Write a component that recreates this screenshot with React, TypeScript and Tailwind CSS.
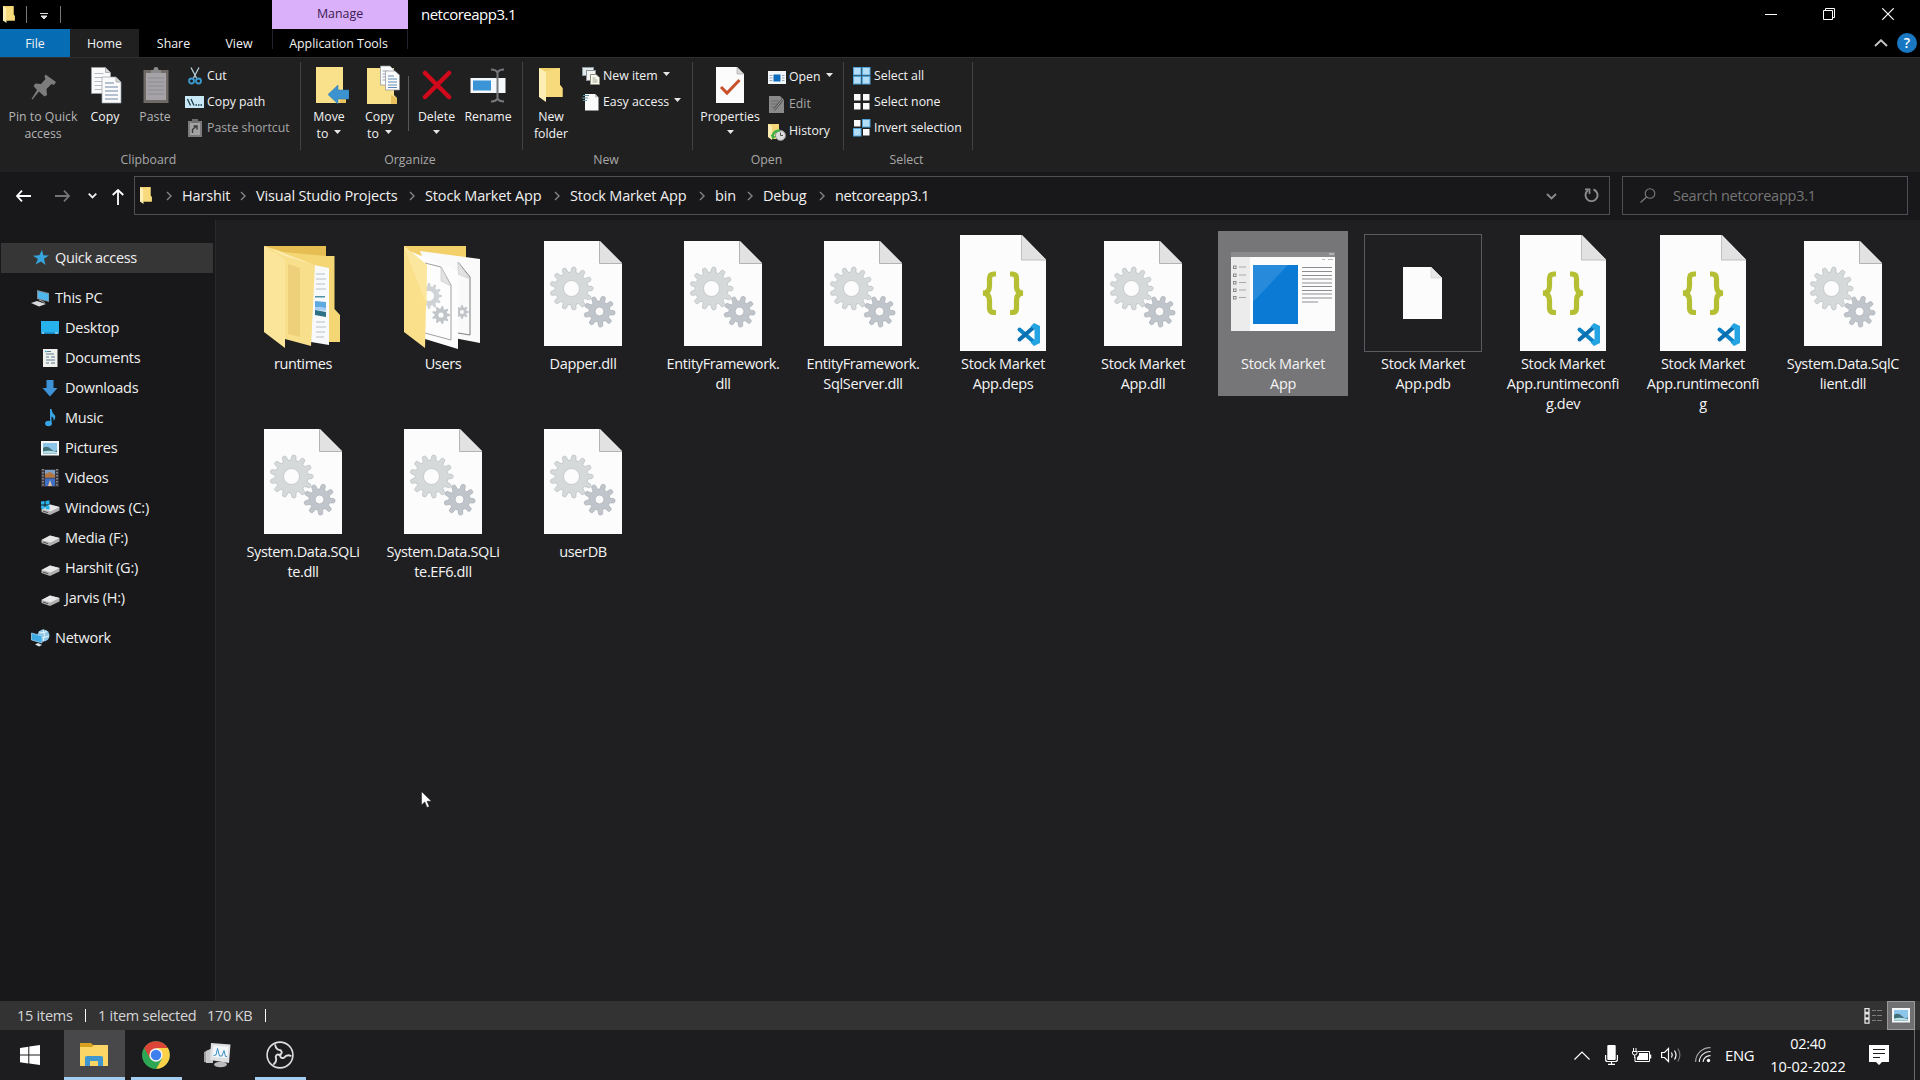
import React from "react";

type Kids = { children?: React.ReactNode };

/* ---------- helpers ---------- */

function gearPath(cx: number, cy: number, outer: number, inner: number, hole: number, teeth: number, rot = 0) {
  const step = (Math.PI * 2) / teeth;
  const pts: string[] = [];
  for (let i = 0; i < teeth; i++) {
    const a = i * step + rot;
    const add = (ang: number, r: number) =>
      pts.push(`${(cx + Math.cos(ang) * r).toFixed(2)} ${(cy + Math.sin(ang) * r).toFixed(2)}`);
    add(a - step * 0.32, inner);
    add(a - step * 0.2, outer - 0.8);
    add(a - step * 0.1, outer);
    add(a + step * 0.1, outer);
    add(a + step * 0.2, outer - 0.8);
    add(a + step * 0.32, inner);
  }
  return `M${pts.join("L")}Z M${cx + hole} ${cy}a${hole} ${hole} 0 1 0 ${-2 * hole} 0a${hole} ${hole} 0 1 0 ${2 * hole} 0Z`;
}

const BIG_GEAR = gearPath(27.5, 47.5, 21.5, 16.5, 8, 13, -1.45);
const SMALL_GEAR = gearPath(55.5, 70.5, 15.5, 10.5, 4.4, 9, -1.3);

/* ---------- file icons ---------- */

function DllIcon() {
  return (
    <svg width="78" height="105" viewBox="0 0 78 105">
      <path d="M0 0H56L78 22V105H0Z" fill="#fcfcfc" />
      <path d="M55.5 0L78 22.5H55.5Z" fill="#e2e2e2" />
      <path d="M55.5 0V22.5H78" fill="none" stroke="#b4b4b4" strokeWidth="1" />
      <path d={BIG_GEAR} fill="#d5d9da" stroke="#bfc3c5" strokeWidth="0.8" fillRule="evenodd" />
      <path d={SMALL_GEAR} fill="#c0c5cb" stroke="#acb1b8" strokeWidth="0.8" fillRule="evenodd" />
    </svg>
  );
}

function JsonIcon() {
  return (
    <svg width="86" height="116" viewBox="0 0 86 116">
      <path d="M0 0H62L86 24.500V116H0Z" fill="#fcfcfc" />
      <path d="M61.500 0L86 25H61.500Z" fill="#e2e2e2" />
      <path d="M61.500 0V25H86" fill="none" stroke="#c0c0c0" />
      <path d="M36 39H34Q29.500 39 29.500 43.500V51Q29.500 58 23 58.200Q29.500 58.400 29.500 65.500V73Q29.500 77.500 34 77.500H36" fill="none" stroke="#b5bf33" strokeWidth="5.200" />
      <path d="M50 39H52Q56.500 39 56.500 43.500V51Q56.500 58 63 58.200Q56.500 58.400 56.500 65.500V73Q56.500 77.500 52 77.500H50" fill="none" stroke="#b5bf33" strokeWidth="5.200" />
      <path d="M59.500 94.500L74 107" stroke="#0a83c8" strokeWidth="4" strokeLinecap="round" />
      <path d="M59.500 104.500L74 92" stroke="#0a6fb0" strokeWidth="4" strokeLinecap="round" />
      <path d="M74 88L80 91V108L74 111L70.500 107.500L74.500 104.500V94.500L70.500 91.500Z" fill="#25a4e4" />
    </svg>
  );
}

function FolderDocsIcon() {
  return (
    <svg width="76" height="103" viewBox="0 0 76 103" className="mt-[9px] mr-[2px]">
      <path d="M0 0H62V10H70.500V63L76 69V96H62L0 86Z" fill="#f4d674" />
      <path d="M0 0H62V10L20 6Z" fill="#e6bd52" />
      <path d="M50 19L65 22V99L47 96Z" fill="#f7f9fa" />
      <path d="M52 28h9M52 33h10M52 38h9M52 43h10M52 76h9M52 81h10M52 86h9M52 91h8" stroke="#b8c0c8" />
      <path d="M51 50h10v1.500H51z" fill="#4e93a5" />
      <path d="M51 55l11 1v6l-11 -1z" fill="#5ea9e0" />
      <path d="M51 61l11 1v3l-11 -1z" fill="#a5cdf5" />
      <path d="M51 64l11 2v5l-11 -2z" fill="#2d7186" />
      <path d="M10 3L51 19L47 100L21 93Z" fill="#f8df8c" />
      <path d="M24 18L36 22V91L24 88Z" fill="#efd07a" />
      <path d="M0 0L21 13V102L0 86Z" fill="#fbe59a" />
      <path d="M0 0L51 19L21 10Z" fill="#fdecaf" />
    </svg>
  );
}

function FolderGearsIcon() {
  return (
    <svg width="76" height="103" viewBox="0 0 76 103" className="mt-[9px] mr-[2px]">
      <path d="M0 0H62V40L20 60L0 86Z" fill="#f3d069" />
      <path d="M16 5L76 13V97L50 92Z" fill="#fafafa" />
      <path d="M54 16L66 31V89L54 87" fill="none" stroke="#7d7d7d" />
      <path d="M54 16V28L66 33Z" fill="#e2e2e2" stroke="#c2c2c2" strokeWidth="0.600" />
      <path d={gearPath(58, 66, 7, 5, 2, 8)} fill="#c2c5c9" fillRule="evenodd" />
      <path d="M8 6L54 25V103L21 93Z" fill="#fdfdfd" />
      <path d="M21 17L37 21L47 39V94L21 87" fill="none" stroke="#a0a0a0" />
      <path d="M37 21V35L47 40Z" fill="#e3e3e3" stroke="#c4c4c4" strokeWidth="0.600" />
      <path d={gearPath(25, 50, 13, 10, 5, 12)} fill="#cfd3d6" fillRule="evenodd" />
      <path d={gearPath(37, 69, 9, 6.5, 2.6, 9)} fill="#c0c5ca" fillRule="evenodd" />
      <path d="M0 0L23 19L21 102L0 86Z" fill="#fbe08c" />
      <path d="M0 0L23 19V60Z" fill="#fce9a6" opacity="0.700" />
    </svg>
  );
}

function AppWindowIcon() {
  return (
    <svg width="104" height="79" viewBox="0 0 104 79" className="-mt-[3px]">
      <rect width="104" height="5" fill="#8a8a8a" />
      <path d="M98 2h5" stroke="#ddd" />
      <rect y="5" width="104" height="74" fill="#fcfcfc" />
      <rect y="5" width="19" height="74" fill="#ececec" />
      <path d="M91 7.500h3M97 7.500h5" stroke="#bbb" />
      {[15, 23, 30.500, 38, 45.500].map((y) => (
        <g key={y}>
          <rect x="2.500" y={y - 1} width="2.500" height="2.500" fill="none" stroke="#888" />
          <path d={`M8 ${y}h7`} stroke="#a8a8a8" />
        </g>
      ))}
      <rect x="22" y="13" width="45" height="59" fill="#0a7ad4" />
      <path d="M22 13H57L22 50Z" fill="#3a94e0" opacity="0.600" />
      {[15.500, 19.500, 23.500, 27, 31, 34.500, 38.500, 42, 46, 50].map((y, i) => (
        <path key={y} d={`M71 ${y}h${i === 9 ? 16 : 30}`} stroke="#8d8d92" strokeWidth="1" />
      ))}
    </svg>
  );
}

function BlankIcon() {
  return (
    <div className="grid h-[118px] w-[118px] place-items-center border border-[#5a5a60]">
      <svg width="39" height="52" viewBox="0 0 39 52">
        <path d="M0 0H28L39 11V52H0Z" fill="#fcfcfc" />
        <path d="M28 0V11H39Z" fill="#e8e8e8" stroke="#cfcfcf" strokeWidth="0.600" />
      </svg>
    </div>
  );
}

/* ---------- ribbon pieces ---------- */

const Caret = () => (
  <svg width="7" height="4" viewBox="0 0 7 4" className="shrink-0"><path d="M0 0H7L3.500 4Z" fill="#e6e6e6" /></svg>
);

function Big({ w, icon, l1, l2, caret, dim }: { w: string; icon: React.ReactNode; l1: string; l2?: string; caret?: boolean; dim?: boolean }) {
  return (
    <div className={`flex shrink-0 flex-col items-center pt-[6px] ${w}`}>
      <div className="grid h-10 place-items-center">{icon}</div>
      <div className={`mt-[3px] text-center leading-[17px] whitespace-nowrap ${dim ? "text-[#b4b4b4]" : "text-[#f2f2f2]"}`}>
        <div>{l1}</div>
        <div className="flex h-[17px] items-center justify-center gap-[6px]">
          {l2}
          {caret && <span className="-mt-[3px] flex"><Caret /></span>}
        </div>
      </div>
    </div>
  );
}

function Small({ icon, label, caret, dim, h = "h-[26px]" }: { icon: React.ReactNode; label: string; caret?: boolean; dim?: boolean; h?: string }) {
  return (
    <div className={`flex items-center whitespace-nowrap ${h} ${dim ? "text-[#a6a6a6]" : "text-[#f2f2f2]"}`}>
      <span className="mr-[3px] grid w-[19px] shrink-0 place-items-center">{icon}</span>
      <span>{label}</span>
      {caret && <span className="-mt-[5px] ml-[5px] flex"><Caret /></span>}
    </div>
  );
}

function Group({ w, label, children }: { w: string; label: string } & Kids) {
  return (
    <>
      <div className={`flex h-full shrink-0 flex-col ${w}`}>
        <div className="flex h-[92px]">{children}</div>
        <div className="h-[18px] pr-[3px] text-center leading-[18px] text-[#a8a8a8]">{label}</div>
      </div>
      <div className="mt-[3px] h-[88px] w-px shrink-0 bg-[#414146]" />
    </>
  );
}

const PinIcon = () => (
  <svg width="26" height="27" viewBox="0 0 26 27" className="mt-1 ml-[2px]">
    <path d="M14.500 0.500L25 8L23 11L20.500 10L15.500 15L16 21L13.500 22.500L8 17.500L1.500 25.500L0.500 25L6 16L2.500 12L4.500 9.500L10 10L14.500 5L13.500 2.500Z" fill="#7c7c7c" />
  </svg>
);
const Page = ({ x, y, c = "#6f87a8" }: { x: number; y: number; c?: string }) => (
  <g transform={`translate(${x} ${y})`}>
    <path d="M0 0H14L19 5V26H0Z" fill="#fafafa" stroke="#9aa0a8" strokeWidth="0.700" />
    <path d="M14 0V5H19Z" fill="#d6d6d6" stroke="#8f959b" strokeWidth="0.700" />
    <path d="M3 6h9M3 10h13M3 14h13M3 18h13M3 22h13" stroke={c} strokeWidth="1" />
  </g>
);
const CopyIcon = () => (
  <svg width="31" height="37" viewBox="0 0 31 37" className="ml-[2px]">
    <Page x={0.5} y={0.5} c="#b6bcc4" />
    <Page x={11} y={10} />
  </svg>
);
const PasteIcon = () => (
  <svg width="26" height="37" viewBox="0 0 26 37" className="ml-px">
    <rect x="0.500" y="3" width="25" height="33" fill="#6f6a66" />
    <rect x="3" y="6" width="20" height="27" fill="#a6a3a8" />
    <path d="M8 6V3H10.500Q10.500 0 13 0T15.500 3H18V6Z" fill="#8b8b8b" />
    <path d="M5 11h16M5 15h16M5 19h16M5 23h16M5 27h16" stroke="#8d8b90" />
  </svg>
);
const FolderBase = () => (
  <>
    <path d="M0 0H27V27L30 30V36H0Z" fill="#f9e08b" />
    <path d="M24 27L30 30V36H24Z" fill="#e9c25d" />
  </>
);
const MoveIcon = () => (
  <svg width="33" height="37" viewBox="0 0 33 37" className="ml-[6px]">
    <FolderBase />
    <path d="M12 27.500L22 18V23H33V32H22V37Z" fill="#3d93cf" stroke="#2b76ae" strokeWidth="0.500" />
  </svg>
);
const CopyToIcon = () => (
  <svg width="33" height="40" viewBox="0 0 33 40" className="-mt-px ml-[7px]">
    <g transform="translate(0 3)"><FolderBase /></g>
    <path d="M13.500 1H23L27 5V20H13.500Z" fill="#fbfbfb" stroke="#8d949b" strokeWidth="0.700" />
    <path d="M15.500 6h5M15.500 9h5M15.500 12h5M15.500 15h4" stroke="#9aa5b3" />
    <path d="M18.500 6H28L32.500 10V25H18.500Z" fill="#fbfbfb" stroke="#8d949b" strokeWidth="0.700" />
    <path d="M21 11h6M21 14h9M21 17h9M21 20h9M21 22.500h9" stroke="#5f8ab8" />
  </svg>
);
const DeleteIcon = () => (
  <svg width="30" height="30" viewBox="0 0 30 30">
    <path d="M3 3L27 27M27 3L3 27" stroke="#d0091b" strokeWidth="4.500" strokeLinecap="round" />
  </svg>
);
const RenameIcon = () => (
  <svg width="36" height="35" viewBox="0 0 36 35">
    <rect x="0.500" y="10" width="35" height="15" fill="#f4f8fb" />
    <rect x="3" y="12.500" width="18" height="10" fill="#3b94d6" />
    <path d="M21 1.500Q26 1.500 27.500 4.500Q29 1.500 34 1.500M27.500 4V31M21 33.500Q26 33.500 27.500 30.500Q29 33.500 34 33.500" fill="none" stroke="#76787b" strokeWidth="2" />
  </svg>
);
const FolderOpen = ({ w, h }: { w: number; h: number }) => (
  <svg width={w} height={h} viewBox="0 0 24 34">
    <path d="M0 0H21V17L23.500 20V29H0Z" fill="#f0cf69" />
    <path d="M0 0L7 4V34L0 29Z" fill="#fdeeb4" />
    <path d="M7 3L21 0V17L23.500 20V29H7Z" fill="#f6da7c" />
  </svg>
);
const PropertiesIcon = () => (
  <svg width="28" height="36" viewBox="0 0 28 36">
    <path d="M0 0H21L28 7V36H0Z" fill="#fcfcfc" />
    <path d="M21 0V7H28Z" fill="#d9d9d9" stroke="#9a9a9a" strokeWidth="0.600" />
    <path d="M5 20L11 26L23.500 13" fill="none" stroke="#c9502b" strokeWidth="3" />
  </svg>
);
const CutIcon = () => (
  <svg width="14" height="18" viewBox="0 0 14 18">
    <path d="M3 0.500L9 12M11 0.500L5 12" stroke="#b8cdd8" strokeWidth="1.300" />
    <circle cx="3.500" cy="14" r="2.500" fill="none" stroke="#3c9bd0" strokeWidth="1.800" />
    <circle cx="10.500" cy="14" r="2.500" fill="none" stroke="#3c9bd0" strokeWidth="1.800" />
  </svg>
);
const CopyPathIcon = () => (
  <svg width="19" height="12" viewBox="0 0 19 12">
    <rect width="19" height="12" fill="#c9e8f5" />
    <path d="M2.500 3L5.500 9.500M6 3L9 9.500" stroke="#1c3a4c" strokeWidth="1.300" />
    <path d="M10.500 9h1.500M13 9h1.500M15.500 9h1.500" stroke="#1c3a4c" strokeWidth="1.400" />
  </svg>
);
const PasteShortcutIcon = () => (
  <svg width="14" height="18" viewBox="0 0 14 18">
    <rect y="2" width="14" height="16" fill="#7c7c7c" />
    <rect x="2" y="4" width="10" height="12" fill="#a3a3a3" />
    <rect x="4" y="0" width="6" height="4" fill="#6f6f6f" />
    <path d="M4.500 14V10.500L8 7.500M5.500 7H9V10.500" fill="none" stroke="#3c3c3c" strokeWidth="1.500" />
  </svg>
);
const NewItemIcon = () => (
  <svg width="18" height="18" viewBox="0 0 18 18">
    <rect x="0.500" y="0.500" width="11" height="8" fill="#dfe9ee" stroke="#8f9a9f" />
    <rect x="4.500" y="3.500" width="9" height="10" fill="#f2f2f2" stroke="#8d9296" />
    <path d="M8.500 7.500H14L17.500 10.500V17.500H8.500Z" fill="#fbfbf4" stroke="#8d8d7c" />
    <path d="M10.500 11h3M10.500 13h5M10.500 15h5" stroke="#a5a58e" />
  </svg>
);
const EasyAccessIcon = () => (
  <svg width="18" height="18" viewBox="0 0 18 18">
    <path d="M3 1H13L16.500 4.500V17.500H3Z" fill="#fbfbfb" />
    <path d="M13 1V4.500H16.500Z" fill="#c5c5c5" />
    <path d="M1 2.500h6M0 5h6M1 7.500h4" stroke="#5e95a8" strokeWidth="1.200" />
  </svg>
);
const OpenIcon = () => (
  <svg width="18" height="13" viewBox="0 0 18 13">
    <rect width="18" height="13" fill="#f2f5f7" />
    <rect x="5.500" y="3.500" width="7" height="7" fill="#0d6cbc" />
    <path d="M1.500 4.500h3M1.500 7h3M1.500 9.500h3M14 4.500h2.500M14 7h2.500M14 9.500h2.500" stroke="#93a9b8" />
  </svg>
);
const EditIcon = () => (
  <svg width="16" height="17" viewBox="0 0 16 17">
    <path d="M0 0H11L15 4V17H0Z" fill="#8a8a8a" />
    <path d="M2 5h8M2 8h7M2 11h5" stroke="#6d6d6d" />
    <path d="M5 14L14 3" stroke="#4b4b4b" strokeWidth="2.500" />
    <path d="M5 14L14 3" stroke="#a5a5a5" />
  </svg>
);
const HistoryIcon = () => (
  <svg width="18" height="18" viewBox="0 0 18 18">
    <path d="M0 1H11V16H4L0 13Z" fill="#f4d877" />
    <path d="M0 1L4 3V17L0 14Z" fill="#fcebb0" />
    <circle cx="12.500" cy="12.500" r="5" fill="#dcdcdc" stroke="#8e8e8e" />
    <path d="M12.500 9.500V12.500H15" fill="none" stroke="#555" />
    <path d="M4.500 13Q6 7.500 12 7.500" fill="none" stroke="#44b04a" strokeWidth="2.400" />
    <path d="M2.500 11.500L8 13.500L4.500 16.500Z" fill="#44b04a" />
  </svg>
);
function SelectIcon({ kind }: { kind: "all" | "none" | "invert" }) {
  const on = kind === "all" ? [1, 1, 1, 1] : kind === "none" ? [0, 0, 0, 0] : [0, 1, 1, 0];
  return (
    <svg width="18" height="18" viewBox="0 0 18 18">
      {on.map((v, i) => {
        const x = (i % 2) * 9;
        const y = Math.floor(i / 2) * 9;
        return v ? (
          <g key={i}>
            <rect x={x} y={y} width="8.500" height="8.500" fill="#4ea3d8" />
            <rect x={x + 1} y={y + 1} width="6.500" height="6.500" fill="#b4ddf8" />
          </g>
        ) : (
          <rect key={i} x={x + 1} y={y + 1} width="6.500" height="6.500" fill="#fafafa" />
        );
      })}
    </svg>
  );
}

/* ---------- navigation pane icons ---------- */

const StarIcon = () => (
  <svg width="16" height="16" viewBox="0 0 16 16"><path d="M9 0L10.300 5.200L16 5.500L11 8.800L12.500 15L8 11.500L2.500 14.500L5 9L0 5.800L6.300 5.200Z" fill="#36a5dd" /></svg>
);
const PcIcon = () => (
  <svg width="19" height="17" viewBox="0 0 19 17">
    <path d="M6 0L18 3V12L6 9Z" fill="#7f8a92" />
    <path d="M7 1.300L17.500 4V11L7 8.300Z" fill="#4db7ee" />
    <path d="M0 13L6 11L15 14L8 16.500Z" fill="#d7dadc" />
    <path d="M8 10L12 11.500L14 13" stroke="#a9adb0" fill="none" />
  </svg>
);
const DesktopIcon = () => (
  <svg width="18" height="14" viewBox="0 0 18 14">
    <rect width="18" height="13" fill="#27b2ee" />
    <path d="M0 11.500h18v1.500H0z" fill="#1583bc" />
    <path d="M1 12h2M14 12h3" stroke="#d6f1fc" />
  </svg>
);
const DocIcon = () => (
  <svg width="15" height="18" viewBox="0 0 15 18">
    <rect width="14.500" height="18" fill="#f0f0ec" />
    <path d="M4 2.500h4M3 5h8M3 8h3M8 8h4M3 11h9M3 14h3M8 14h4" stroke="#5a7d94" strokeWidth="1.200" />
    <path d="M2 2.500h1.500" stroke="#2aa0dd" strokeWidth="1.500" />
  </svg>
);
const DownIcon = () => (
  <svg width="16" height="17" viewBox="0 0 16 17"><path d="M4.500 0H11.500V8H15.500L8 16.500L0.500 8H4.500Z" fill="#3d92d8" /></svg>
);
const MusicIcon = () => (
  <svg width="11" height="18" viewBox="0 0 11 18">
    <path d="M5 0H6.500Q7 4 10 6.500Q11 9 8.500 12Q9 8.500 6.500 7.500V14H5Z" fill="#37a3e2" />
    <ellipse cx="3.500" cy="14.500" rx="3.400" ry="2.700" fill="#37a3e2" />
  </svg>
);
const PicturesIcon = () => (
  <svg width="18" height="15" viewBox="0 0 18 15">
    <rect width="18" height="14.500" fill="#f3f5f6" />
    <rect x="2" y="2" width="14" height="10.500" fill="#8cc4ea" />
    <path d="M2 7Q6 4 10 8T16 9V12.500H2Z" fill="#40707a" />
    <path d="M2 10.500Q8 9 16 11V12.500H2Z" fill="#b8dfe6" />
  </svg>
);
const VideosIcon = () => (
  <svg width="18" height="18" viewBox="0 0 18 18">
    <rect width="18" height="18" fill="#37343c" />
    <path d="M2 0V18M16 0V18" stroke="#8a8a8a" strokeWidth="1.800" strokeDasharray="1.500 1.500" />
    <rect x="4" y="1" width="10" height="7.500" fill="#7da1c9" />
    <path d="M4 5L9 3L14 6V8.500H4Z" fill="#b5753f" />
    <rect x="4" y="9.500" width="10" height="7.500" fill="#3f6fc7" />
    <path d="M7 17L9 11L11 17Z" fill="#e2c39b" />
  </svg>
);
const DriveIcon = ({ win }: { win?: boolean }) => (
  <svg width="19" height="16" viewBox="0 0 19 16" className={win ? "" : "mt-[2px]"}>
    <path d="M0.500 9L9 4.500L18.500 7V10.500L9 15L0.500 12Z" fill="#b0b0b0" />
    <path d="M0.500 9L9 4.500L18.500 7L9.500 11.500Z" fill="#e8e8e8" />
    <path d="M2 10.800L7 12.300V13L2 11.600Z" fill="#3d3d3d" />
    {win && <path d="M0 1.500L3.500 1V4.500H0ZM4.500 0.900L8.500 0.300V4.500H4.500ZM0 5.500H3.500V9L0 8.500ZM4.500 5.500H8.500V9.800L4.500 9.200Z" fill="#28b3ec" />}
  </svg>
);
const NetworkIcon = () => (
  <svg width="19" height="18" viewBox="0 0 19 18">
    <circle cx="12.500" cy="6.500" r="6" fill="#8fc6e6" />
    <path d="M8 3Q12 5 16 2.500M7 8Q12 10 18 7M12 0.500Q15 6 12 12.500" fill="none" stroke="#e6f4fb" />
    <path d="M0.500 4L11 7V14L0.500 11Z" fill="#3fa9e4" stroke="#9fd1ee" strokeWidth="0.800" />
    <path d="M4 15.500L7 14L11 16L8 17.500Z" fill="#dbe6ec" />
  </svg>
);

/* ---------- data ---------- */

const PLACES: [React.ReactNode, string][] = [
  [<DesktopIcon />, "Desktop"],
  [<DocIcon />, "Documents"],
  [<DownIcon />, "Downloads"],
  [<MusicIcon />, "Music"],
  [<PicturesIcon />, "Pictures"],
  [<VideosIcon />, "Videos"],
  [<DriveIcon win />, "Windows (C:)"],
  [<DriveIcon />, "Media (F:)"],
  [<DriveIcon />, "Harshit (G:)"],
  [<DriveIcon />, "Jarvis (H:)"],
];

const CRUMBS: [string, string][] = [
  ["Harshit", "w-[74px]"],
  ["Visual Studio Projects", "w-[169px]"],
  ["Stock Market App", "w-[145px]"],
  ["Stock Market App", "w-[145px]"],
  ["bin", "w-[48px]"],
  ["Debug", "w-[72px]"],
];

const FILES: { icon: React.ReactNode; lines: string[]; selected?: boolean }[] = [
  { icon: <FolderDocsIcon />, lines: ["runtimes"] },
  { icon: <FolderGearsIcon />, lines: ["Users"] },
  { icon: <DllIcon />, lines: ["Dapper.dll"] },
  { icon: <DllIcon />, lines: ["EntityFramework.", "dll"] },
  { icon: <DllIcon />, lines: ["EntityFramework.", "SqlServer.dll"] },
  { icon: <JsonIcon />, lines: ["Stock Market", "App.deps"] },
  { icon: <DllIcon />, lines: ["Stock Market", "App.dll"] },
  { icon: <AppWindowIcon />, lines: ["Stock Market", "App"], selected: true },
  { icon: <BlankIcon />, lines: ["Stock Market", "App.pdb"] },
  { icon: <JsonIcon />, lines: ["Stock Market", "App.runtimeconfi", "g.dev"] },
  { icon: <JsonIcon />, lines: ["Stock Market", "App.runtimeconfi", "g"] },
  { icon: <DllIcon />, lines: ["System.Data.SqlC", "lient.dll"] },
  { icon: <DllIcon />, lines: ["System.Data.SQLi", "te.dll"] },
  { icon: <DllIcon />, lines: ["System.Data.SQLi", "te.EF6.dll"] },
  { icon: <DllIcon />, lines: ["userDB"] },
];

const CrumbArrow = () => (
  <svg width="6" height="10" viewBox="0 0 6 10"><path d="M1 1L5 5L1 9" fill="none" stroke="#858585" strokeWidth="1.400" /></svg>
);

/* ---------- sections ---------- */

function TitleAndTabs() {
  return (
    <header className="flex h-[57px] shrink-0 bg-black">
      <div className="w-[272px]">
        <div className="flex h-[29px] items-center pl-[3px]">
          <FolderOpen w={12} h={17} />
          <span className="ml-[11px] h-[17px] w-px bg-[#777]" />
          <svg width="8" height="7" viewBox="0 0 8 7" className="mt-[3px] ml-[13px]"><path d="M0 0.500H8M1 3H7L4 6Z" stroke="#ddd" strokeWidth="1" fill="#ddd" /></svg>
          <span className="ml-[12px] h-[17px] w-px bg-[#777]" />
        </div>
        <div className="flex h-[28px] text-[12.400px] leading-[29px] text-[#f2f2f2]">
          <div className="w-[70px] bg-[#066cb4] text-center">File</div>
          <div className="w-[69px] bg-[#202021] text-center">Home</div>
          <div className="w-[68px] pl-px text-center">Share</div>
          <div className="w-[64px] text-center">View</div>
        </div>
      </div>
      <div className="w-[136px] text-center text-[12.400px]">
        <div className="h-[29px] bg-[#dab0fa] leading-[27px] text-[#3c1a52]">Manage</div>
        <div className="h-[20px] border-x border-[#26202c] pr-[3px] leading-[29px] whitespace-nowrap text-[#f2f2f2]">Application Tools</div>
      </div>
      <div className="h-[29px] pl-[13px] text-[15px] leading-[29px] tracking-[-0.500px] text-white">netcoreapp3.1</div>
      <div className="ml-auto flex flex-col">
        <div className="flex h-[27px] items-center pr-[26px]">
          <svg width="12" height="12" viewBox="0 0 12 12"><path d="M0 6.500H12" stroke="#fff" /></svg>
          <svg width="12" height="12" viewBox="0 0 12 12" className="ml-[46px]"><path d="M0.500 2.500H9.500V11.500H0.500ZM2.500 2.500V0.500H11.500V9.500H9.500" fill="none" stroke="#fff" /></svg>
          <svg width="12" height="12" viewBox="0 0 12 12" className="ml-[47px]"><path d="M0.300 0.300L11.700 11.700M11.700 0.300L0.300 11.700" stroke="#fff" strokeWidth="1.200" /></svg>
        </div>
        <div className="flex h-[30px] items-center justify-end pr-[3px] pt-px">
          <svg width="14" height="8" viewBox="0 0 14 8"><path d="M1 7L7 1.300L13 7" fill="none" stroke="#c4c4c4" strokeWidth="2" /></svg>
          <span className="ml-[9px] grid h-5 w-5 place-items-center rounded-full bg-[#1a78c2] text-[14px] leading-none font-semibold text-white">?</span>
        </div>
      </div>
    </header>
  );
}

function Ribbon() {
  return (
    <div className="flex h-[115px] shrink-0 border-t border-[#2f2f31] bg-[#202021] pt-px text-[12.300px]">
      <Group w="w-[300px]" label="Clipboard">
        <Big w="w-[86px]" icon={<PinIcon />} l1="Pin to Quick" l2="access" dim />
        <Big w="w-[38px]" icon={<CopyIcon />} l1="Copy" />
        <Big w="w-[62px]" icon={<PasteIcon />} l1="Paste" dim />
        <div className="-ml-px pt-[4px]">
          <Small icon={<CutIcon />} label="Cut" />
          <Small icon={<CopyPathIcon />} label="Copy path" />
          <Small icon={<PasteShortcutIcon />} label="Paste shortcut" dim />
        </div>
      </Group>
      <Group w="w-[221px]" label="Organize">
        <Big w="w-[56px]" icon={<MoveIcon />} l1="Move" l2="to" caret />
        <Big w="w-[45px]" icon={<CopyToIcon />} l1="Copy" l2="to" caret />
        <div className="mt-[17px] ml-[6px] h-[55px] w-px bg-[#57575c]" />
        <Big w="w-[55px]" icon={<DeleteIcon />} l1="Delete" caret />
        <Big w="w-[48px]" icon={<RenameIcon />} l1="Rename" />
      </Group>
      <Group w="w-[169px]" label="New">
        <Big w="w-[56px]" icon={<FolderOpen w={24} h={34} />} l1="New" l2="folder" />
        <div className="pt-[4px] pl-[2px]">
          <Small icon={<NewItemIcon />} label="New item" caret />
          <Small icon={<EasyAccessIcon />} label="Easy access" caret />
        </div>
      </Group>
      <Group w="w-[150px]" label="Open">
        <Big w="w-[74px]" icon={<PropertiesIcon />} l1="Properties" caret />
        <div className="pt-[5px]">
          <Small h="h-[27px]" icon={<OpenIcon />} label="Open" caret />
          <Small h="h-[27px]" icon={<EditIcon />} label="Edit" dim />
          <Small h="h-[27px]" icon={<HistoryIcon />} label="History" />
        </div>
      </Group>
      <Group w="w-[128px]" label="Select">
        <div className="pt-[4px] pl-[8px]">
          <Small icon={<SelectIcon kind="all" />} label="Select all" />
          <Small icon={<SelectIcon kind="none" />} label="Select none" />
          <Small icon={<SelectIcon kind="invert" />} label="Invert selection" />
        </div>
      </Group>
    </div>
  );
}

function AddressRow() {
  return (
    <div className="flex h-[48px] shrink-0 bg-[#18181a] pt-[4px] text-[14.500px] tracking-[-0.150px]">
      <div className="flex h-[39px] w-[134px] shrink-0 items-center pl-4">
        <svg width="15" height="12" viewBox="0 0 15 12"><path d="M6 0.700L1 6L6 11.300M1 6H15" fill="none" stroke="#fff" strokeWidth="1.800" /></svg>
        <svg width="15" height="12" viewBox="0 0 15 12" className="ml-[24px]"><path d="M9 0.700L14 6L9 11.300M14 6H0" fill="none" stroke="#747474" strokeWidth="1.800" /></svg>
        <svg width="9" height="6" viewBox="0 0 9 6" className="ml-[18px]"><path d="M0.700 0.700L4.500 4.500L8.300 0.700" fill="none" stroke="#eee" strokeWidth="1.800" /></svg>
        <svg width="12" height="16" viewBox="0 0 12 16" className="mt-[2px] ml-[15px]"><path d="M0.700 6L6 1L11.300 6M6 1V16" fill="none" stroke="#fff" strokeWidth="1.800" /></svg>
      </div>
      <div className="flex h-[39px] w-[1476px] shrink-0 items-center border border-[#4f4f55] pl-[5px] text-[#f0f0f0]">
        <FolderOpen w={12} h={17} />
        <span className="ml-[14px] flex w-[16px]"><CrumbArrow /></span>
        {CRUMBS.map(([name, w], i) => (
          <span key={i} className={`flex shrink-0 items-center justify-between whitespace-nowrap ${w}`}>
            {name}
            <span className="mr-[10px] flex"><CrumbArrow /></span>
          </span>
        ))}
        <span className="tracking-[-0.300px]">netcoreapp3.1</span>
        <svg width="11" height="7" viewBox="0 0 11 7" className="mt-px mr-px ml-auto"><path d="M1 1L5.500 5.500L10 1" fill="none" stroke="#8c8c8c" strokeWidth="1.800" /></svg>
        <svg width="15" height="15" viewBox="0 0 15 15" className="mr-[10px] ml-[26px]">
          <path d="M9.500 1.500A6 6 0 1 1 4 2.300" fill="none" stroke="#8c8c8c" strokeWidth="1.900" />
          <path d="M1 1.300H5.500V6" fill="none" stroke="#8c8c8c" strokeWidth="1.700" />
        </svg>
      </div>
      <div className="ml-[12px] flex h-[39px] w-[286px] shrink-0 items-center border border-[#4f4f55] pl-[17px] text-[#757575]">
        <svg width="16" height="15" viewBox="0 0 16 15"><circle cx="10" cy="5.500" r="4.800" fill="none" stroke="#7c7c7c" strokeWidth="1.100" /><path d="M6.500 9L0.500 14.500" stroke="#7c7c7c" strokeWidth="1.200" /></svg>
        <span className="ml-[17px] tracking-[-0.250px]">Search netcoreapp3.1</span>
      </div>
    </div>
  );
}

function Row({ icon, label, pad, className = "" }: { icon: React.ReactNode; label: string; pad: string; className?: string }) {
  return (
    <div className={`flex h-[30px] shrink-0 items-center ${pad} ${className}`}>
      <span className="grid w-[20px] place-items-center">{icon}</span>
      <span className="ml-[4px] whitespace-nowrap">{label}</span>
    </div>
  );
}

function Sidebar() {
  return (
    <nav className="flex w-[216px] shrink-0 flex-col border-r border-[#2a2a2c] bg-[#18181a] pt-[23px] text-[14.500px] tracking-[-0.250px] text-[#f0f0f0]">
      <div className="pr-[2px] pl-px">
        <Row icon={<StarIcon />} label="Quick access" pad="pl-[30px]" className="bg-[#363637] tracking-[-0.350px]" />
      </div>
      <div className="h-[10px] shrink-0" />
      <Row icon={<PcIcon />} label="This PC" pad="pl-[30px]" className="[&>span:last-child]:ml-[5px]" />
      {PLACES.map(([icon, label]) => (
        <Row key={label} icon={icon} label={label} pad="pl-[40px]" className="[&>span:last-child]:ml-[5px]" />
      ))}
      <div className="h-[10px] shrink-0" />
      <Row icon={<NetworkIcon />} label="Network" pad="pl-[30px]" className="[&>span:last-child]:ml-[5px]" />
    </nav>
  );
}

function Files() {
  return (
    <main className="relative flex-1 bg-[#1f1f22] pt-[11px] pl-[22px]">
      <div className="grid auto-rows-[165px] grid-cols-[repeat(12,130px)] gap-x-[10px] gap-y-[23px]">
        {FILES.map((f, i) => (
          <div key={i} className={`flex flex-col items-center pt-[3px] text-[14.500px] leading-[20px] tracking-[-0.350px] text-[#f4f4f4] ${f.selected ? "bg-[#767678]" : ""}`}>
            <div className="grid h-[118px] shrink-0 place-items-center pr-px">{f.icon}</div>
            <div className="mt-[2px] text-center whitespace-nowrap">
              {f.lines.map((l) => (
                <div key={l}>{l}</div>
              ))}
            </div>
          </div>
        ))}
      </div>
      <svg width="12" height="18" viewBox="0 0 12 18" className="absolute top-[571px] left-[205px]">
        <path d="M0.500 0.500V14L3.800 11L6 16.500L8.300 15.500L6 10.300H10.500Z" fill="#fff" stroke="#111" strokeWidth="0.500" />
      </svg>
    </main>
  );
}

function StatusBar() {
  return (
    <div className="flex h-[29px] shrink-0 items-center bg-[#333334] pl-[17px] text-[14.500px] tracking-[-0.250px] whitespace-nowrap text-[#d6d6d6]">
      <span className="w-[68px]">15 items</span>
      <span className="h-[13px] w-px bg-white" />
      <span className="ml-[12px] w-[109px]">1 item selected</span>
      <span className="w-[58px]">170 KB</span>
      <span className="h-[13px] w-px bg-white" />
      <svg width="18" height="16" viewBox="0 0 18 16" className="ml-auto">
        <path d="M1 0.500h4v4h-4zM1 5.800h4v4h-4zM1 11.200h4v4h-4z" fill="none" stroke="#e6e6e6" strokeWidth="1.300" />
        <path d="M8 2.500h4M13 2.500h5M8 7.500h4M13 7.500h5M8 12.500h4M13 12.500h5" stroke="#7d7d7d" />
      </svg>
      <span className="mr-[5px] ml-[5px] grid h-[29px] w-[28px] place-items-center border border-[#9a9a9a] bg-[#707072]"><PicturesIcon /></span>
    </div>
  );
}

function Taskbar() {
  return (
    <footer className="flex h-[50px] shrink-0 bg-[#1d1d1f] text-white">
      <div className="grid w-[64px] place-items-center pr-[4px]">
        <svg width="20" height="20" viewBox="0 0 20 20"><path d="M0 2.900L8.300 1.700V9.500H0ZM9.300 1.500L20 0V9.500H9.300ZM0 10.500H8.300V18.400L0 17.200ZM9.300 10.500H20V20L9.300 18.500Z" fill="#fff" /></svg>
      </div>
      <div className="flex w-[61px] flex-col items-center border-b-[3px] border-[#a5cdf0] bg-[#48484a] pt-[12px] pr-[2px]">
        <svg width="28" height="25" viewBox="0 0 28 25">
          <path d="M0 1H11L13 3H24V7H0Z" fill="#d99f1e" />
          <path d="M0 5H12L14 3H28V24H0Z" fill="#fbd667" />
          <path d="M5 24V16Q5 14 7 14H21Q23 14 23 16V24H18V19H10V24Z" fill="#3f97cf" />
        </svg>
      </div>
      <div className="ml-[6px] flex w-[51px] flex-col items-center border-b-[3px] border-[#a5cdf0] pt-[11px] pr-[2px]">
        <svg width="28" height="28" viewBox="0 0 28 28">
          <circle cx="14" cy="14" r="13.800" fill="#2fa653" />
          <path d="M14 14L2.050 7.100A13.800 13.800 0 0 1 25.950 7.100Z" fill="#db4437" />
          <path d="M14 7.100H25.950A13.800 13.800 0 0 1 14 27.800L20 17.500Z" fill="#fdd04a" />
          <path d="M2.050 7.100L8 17.500L14 14V7.100Z" fill="#db4437" />
          <path d="M2.050 7.100L8 17.500L10 19.500L14 20.900L20 17.500L14 27.800A13.800 13.800 0 0 1 2.050 7.100Z" fill="#2fa653" />
          <circle cx="14" cy="14" r="6.700" fill="#f5f5f5" />
          <circle cx="14" cy="14" r="5.200" fill="#3f7fee" />
        </svg>
      </div>
      <div className="grid w-[70px] place-items-center">
        <svg width="27" height="25" viewBox="0 0 27 25">
          <path d="M0 9L7 6V20L0 19Z" fill="#9fa1a4" />
          <path d="M2 8L9 5V20H2Z" fill="#c6c8ca" />
          <path d="M7 0L26.500 1.500L25 20L6 17Z" fill="#dedfe1" />
          <path d="M9 2.500L24.500 3.500L23.300 15L8.500 14Z" fill="#f3f7fa" />
          <path d="M9.500 12.500L12 12L13.500 5.500L15.500 13L18 13L20 7.500L21.500 13.500H23" fill="none" stroke="#3b8fc4" />
          <ellipse cx="16.500" cy="21.500" rx="6.500" ry="2.800" fill="#b8babc" />
        </svg>
      </div>
      <div className="ml-[3px] flex w-[51px] flex-col items-center border-b-[3px] border-[#a5cdf0] pt-[11px] pr-[2px]">
        <svg width="28" height="28" viewBox="0 0 28 28" fill="none" stroke="#dedede">
          <circle cx="14" cy="14" r="12.900" strokeWidth="1.600" />
          {[0, 120, 240].map((a) => (
            <path key={a} transform={`rotate(${a} 14 14)`} d="M13.500 14Q17.500 12 14.500 9.300Q10 8.500 9.300 4.300" strokeWidth="1.900" strokeLinecap="round" />
          ))}
        </svg>
      </div>
      <div className="ml-auto flex items-center">
        <svg width="16" height="9" viewBox="0 0 16 9"><path d="M0.500 8.500L8 1L15.500 8.500" fill="none" stroke="#fff" strokeWidth="1.200" /></svg>
        <svg width="13" height="20" viewBox="0 0 13 20" className="ml-[15px]">
          <rect x="2.300" y="0" width="8.400" height="15" rx="1" fill="#fff" />
          <path d="M0.600 10V14.500Q0.600 16.500 2.600 16.500H10.400Q12.400 16.500 12.400 14.500V10M6.500 16.500V19.400M3 19.400H10" fill="none" stroke="#fff" strokeWidth="1.200" />
        </svg>
        <svg width="20" height="15" viewBox="0 0 20 15" className="ml-[14px]">
          <path d="M5.500 3.500H17.500V13.500H3V9" fill="none" stroke="#fff" />
          <path d="M7 5H16V12H5V9.500L7 7Z" fill="#fff" />
          <path d="M18.500 6.500V10.500" stroke="#fff" strokeWidth="1.500" />
          <path d="M1.500 0V3M4 0V3M0.500 3.500H5V5Q5 7 2.700 7T0.500 5ZM2.700 7V10" fill="none" stroke="#fff" />
        </svg>
        <svg width="21" height="18" viewBox="0 0 21 18" className="ml-[9px]" fill="none" stroke="#fff" strokeWidth="1.200">
          <path d="M0.600 6.500H3.500L7.500 2.500V15.500L3.500 11.500H0.600Z" />
          <path d="M10.500 6.500Q12 9 10.500 11.500M13.500 4.500Q16.500 9 13.500 13.500" />
          <path d="M16.800 2.500Q21 9 16.800 15.500" stroke="#777" />
        </svg>
        <svg width="16" height="16" viewBox="0 0 16 16" className="ml-[13px]" fill="none" stroke="#eee" strokeWidth="1.100">
          <path d="M0.600 15A14.500 14.500 0 0 1 15.500 0.600" stroke="#aaa" />
          <path d="M4.300 15A10.500 10.500 0 0 1 15.500 4.600M8 15A7 7 0 0 1 15.500 8.600" />
          <circle cx="13.500" cy="13.500" r="1.700" fill="#fff" stroke="none" />
        </svg>
        <span className="ml-[14px] w-[28px] text-[14.800px] tracking-[-0.300px]">ENG</span>
        <div className="ml-[17px] w-[76px] text-center text-[14.500px] leading-[23px] whitespace-nowrap">
          <div className="tracking-[-0.300px]">02:40</div>
          <div>10-02-2022</div>
        </div>
        <svg width="20" height="20" viewBox="0 0 20 20" className="ml-[23px]">
          <path d="M0 0H20V17H13L10 20L7 17H0Z" fill="#fff" />
          <path d="M4 4.500H16M4 8.500H16M4 12.500H11" stroke="#1d1d1f" strokeWidth="1.200" />
        </svg>
        <div className="mr-[5px] ml-[25px] h-[50px] w-px bg-[#6a6a6c]" />
      </div>
    </footer>
  );
}

export default function App() {
  return (
    <div className="flex h-[1080px] w-[1920px] flex-col overflow-hidden bg-[#18181a] font-['Open_Sans',sans-serif] select-none">
      <TitleAndTabs />
      <Ribbon />
      <AddressRow />
      <div className="flex min-h-0 flex-1">
        <Sidebar />
        <Files />
      </div>
      <StatusBar />
      <Taskbar />
    </div>
  );
}
